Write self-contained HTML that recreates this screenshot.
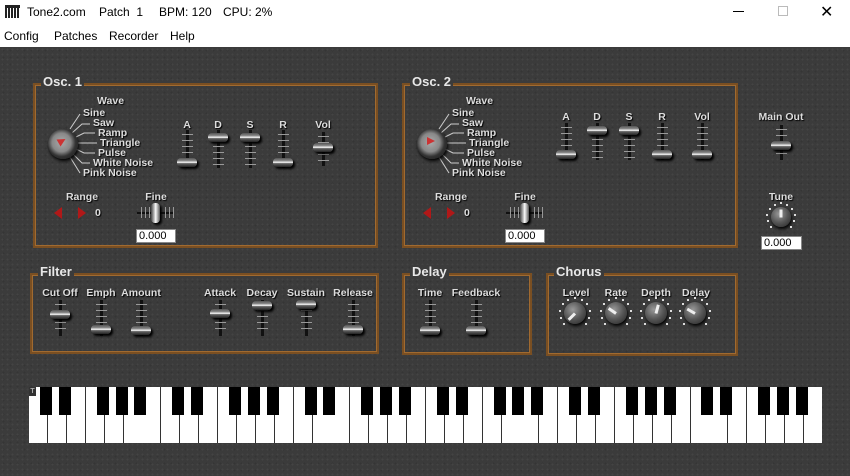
<!DOCTYPE html>
<html><head><meta charset="utf-8"><style>
*{margin:0;padding:0;box-sizing:border-box}
body{width:850px;height:476px;overflow:hidden;background:#fff;font-family:"Liberation Sans",sans-serif;position:relative}
#title{position:absolute;left:0;top:0;width:850px;height:25px;background:#fff;font-size:12px;color:#000}
#menu{position:absolute;left:0;top:25px;width:850px;height:22px;background:#fff;font-size:12px}
#main{position:absolute;left:0;top:47px;width:850px;height:429px;background:#3b3b3b;
background-image:radial-gradient(#444 1px,transparent 1px),radial-gradient(#353535 1px,transparent 1px);background-size:5px 5px,7px 7px}
.a{position:absolute;white-space:nowrap}
.box{position:absolute;border:2px solid #7a4f22;box-shadow:inset 0 0 0 1px #a06a30}
.ttl{position:absolute;font-weight:bold;font-size:13px;color:#e8e8e8;background:#3b3b3b;padding:0 2px;line-height:14px}
.l{position:absolute;font-weight:bold;font-size:10.5px;color:#ddd;white-space:nowrap;text-shadow:1px 1px 1px #000;line-height:11px}
.trk{position:absolute;width:3px;background:#111}
.tick{position:absolute;height:1px;width:11px;background:#999}
.cap{position:absolute;width:20px;height:9px;border-radius:4px;background:linear-gradient(#555,#888 30%,#fff 50%,#666 60%,#222);box-shadow:2px 2px 2px #000}
.knob{position:absolute;border-radius:50%;background:radial-gradient(circle at 40% 35%,#999,#555 50%,#222);box-shadow:1px 2px 3px #000}
.inp{position:absolute;background:#fff;border:1px solid #888;font-size:11px;color:#000;line-height:12px;padding-left:2px}
.wk{position:absolute;top:0;width:19px;height:56px;background:#fff;border-right:1px solid #333}
.bk{position:absolute;top:0;width:12px;height:28px;background:#000}
</style></head><body>
<div id="title">
<div class="a" style="left:5px;top:5px;width:15px;height:13px;background:repeating-linear-gradient(90deg,#222 0 2px,#fff 2px 3px);border-top:3px solid #222"></div>
<div class="a" style="left:27px;top:5px">Tone2.com</div>
<div class="a" style="left:99px;top:5px">Patch &nbsp;1</div>
<div class="a" style="left:159px;top:5px">BPM: 120</div>
<div class="a" style="left:223px;top:5px">CPU: 2%</div>
<div class="a" style="left:733px;top:11px;width:11px;height:1px;background:#000"></div>
<div class="a" style="left:778px;top:6px;width:10px;height:10px;border:1px solid #bbb"></div>
<div class="a" style="left:820px;top:2px;font-size:16px">✕</div>
</div>
<div id="menu">
<div class="a" style="left:4px;top:4px">Config</div>
<div class="a" style="left:54px;top:4px">Patches</div>
<div class="a" style="left:109px;top:4px">Recorder</div>
<div class="a" style="left:170px;top:4px">Help</div>
</div>
<div id="main"></div>
<div id="c"></div>
<script>
var h='';
function box(x,y,w,hh,t){h+='<div class="box" style="left:'+x+'px;top:'+y+'px;width:'+w+'px;height:'+hh+'px"></div><div class="ttl" style="left:'+(x+8)+'px;top:'+(y-8)+'px">'+t+'</div>';}
function lab(x,y,t,c){h+='<div class="l" style="left:'+x+'px;top:'+(y-5)+'px;'+(c?'transform:translateX(-50%)':'')+'">'+t+'</div>';}
function sl(x,t,b,k,label,ly){lab(x,ly,label,1);h+='<div class="trk" style="left:'+(x-1)+'px;top:'+t+'px;height:'+(b-t)+'px"></div>';
for(var y=t+4;y<b-2;y+=6)h+='<div class="tick" style="left:'+(x-5)+'px;top:'+y+'px"></div>';
h+='<div class="cap" style="left:'+(x-10)+'px;top:'+(k-4)+'px"></div>';}
function knob(x,y,r,ang,dots){h+='<div class="knob" style="left:'+(x-r)+'px;top:'+(y-r)+'px;width:'+2*r+'px;height:'+2*r+'px"></div>';
h+='<div class="a" style="left:'+x+'px;top:'+(y-1)+'px;width:'+(r-2)+'px;height:3px;background:#eee;transform-origin:0 50%;transform:rotate('+ang+'deg)"></div>';
if(dots)for(var a=135;a<=405;a+=27){var rr=r+4;h+='<div class="a" style="left:'+(x+rr*Math.cos(a*Math.PI/180)-1)+'px;top:'+(y+rr*Math.sin(a*Math.PI/180)-1)+'px;width:2px;height:2px;background:#ddd"></div>';}}
function osc(ox,name,w0){box(ox+33,83,w0,165,name);
lab(ox+97,101,'Wave');var w=[['Sine',83,113],['Saw',93,123],['Ramp',98,133],['Triangle',100,143],['Pulse',98,153],['White Noise',93,163],['Pink Noise',83,173]];
w.forEach(function(e){lab(ox+e[1],e[2],e[0]);});
var ls='<svg class="a" style="left:'+ox+'px;top:100px" width="110" height="80"><g stroke="#ccc" stroke-width="1" fill="none">'+
'<path d="M70 29 L80 14"/><path d="M72 33 L82 24 L90 24"/><path d="M76 37 L84 33 L95 33"/><path d="M78 43 L97 43"/><path d="M76 49 L84 53 L95 53"/><path d="M72 53 L82 63 L90 63"/><path d="M70 57 L80 73"/></g></svg>';
h+=ls;
h+='<div class="knob" style="left:'+(ox+48)+'px;top:'+129+'px;width:30px;height:30px;background:radial-gradient(circle at 45% 45%,#aaa,#888 40%,#333 60%,#111)"></div>';
h+='<div class="a" style="left:'+(ox+58)+'px;top:137px;width:0;height:0;border-top:4px solid transparent;border-bottom:4px solid transparent;border-left:8px solid #c33;transform:rotate('+(name=='Osc. 1'?-30:0)+'deg)"></div>';
lab(ox+82,197,'Range',1);
h+='<div class="a" style="left:'+(ox+54)+'px;top:207px;border-top:6px solid transparent;border-bottom:6px solid transparent;border-right:8px solid #b01818"></div>';
h+='<div class="a" style="left:'+(ox+78)+'px;top:207px;border-top:6px solid transparent;border-bottom:6px solid transparent;border-left:8px solid #b01818"></div>';
lab(ox+95,213,'0');lab(ox+156,197,'Fine',1);
h+='<div class="a" style="left:'+(ox+137)+'px;top:212px;width:36px;height:2px;background:#111"></div>';
for(var i=0;i<6;i++)h+='<div class="a" style="left:'+(ox+141+i*4+(i>=3?12:0))+'px;top:207px;width:1px;height:11px;background:#999"></div>';
h+='<div class="a" style="left:'+(ox+151)+'px;top:203px;width:9px;height:20px;border-radius:4px;background:linear-gradient(90deg,#444,#ddd 45%,#fff 50%,#555);box-shadow:2px 2px 2px #000"></div>';
h+='<div class="inp" style="left:'+(ox+136)+'px;top:229px;width:40px;height:14px">0.000</div>';}
osc(0,'Osc. 1',345);osc(369,'Osc. 2',336);
sl(187,130,168,162,'A',125);sl(218,130,168,137,'D',125);sl(250,130,168,137,'S',125);sl(283,130,168,162,'R',125);sl(323,132,166,147,'Vol',125);
sl(566,123,160,154,'A',117);sl(597,123,160,130,'D',117);sl(629,123,160,130,'S',117);sl(662,123,160,154,'R',117);sl(702,123,160,154,'Vol',117);
sl(781,125,160,145,'Main Out',117);
lab(781,197,'Tune',1);knob(781,217,10,-90,1);
h+='<div class="inp" style="left:761px;top:236px;width:41px;height:14px">0.000</div>';
box(30,273,349,81,'Filter');box(402,273,130,82,'Delay');box(546,273,192,83,'Chorus');
sl(60,300,336,314,'Cut Off',293);sl(101,300,336,329,'Emph',293);sl(141,300,336,330,'Amount',293);
sl(220,300,336,313,'Attack',293);sl(262,300,336,305,'Decay',293);sl(306,300,336,304,'Sustain',293);sl(353,300,336,329,'Release',293);
sl(430,300,336,330,'Time',293);sl(476,300,336,330,'Feedback',293);
lab(576,293,'Level',1);lab(616,293,'Rate',1);lab(656,293,'Depth',1);lab(696,293,'Delay',1);
knob(575,313,11,135,1);knob(616,313,11,-145,1);knob(656,313,11,-75,1);knob(695,313,11,-150,1);
var k='<div class="a" style="left:29px;top:387px;width:793px;height:56px;background:#fff;overflow:hidden">';
for(var i=0;i<42;i++)k+='<div class="wk" style="left:'+(i*18.9)+'px"></div>';
var bp=[1,2,4,5,6];
for(var o=0;o<6;o++)bp.forEach(function(n){k+='<div class="bk" style="left:'+((o*7+n)*18.9-8)+'px"></div>';});
k+='<div class="a" style="left:0;top:0;width:7px;height:9px;background:#333;color:#aaa;font-size:7px;font-weight:bold;line-height:9px;text-align:center">T</div></div>';
h+=k;
document.getElementById('c').innerHTML=h;
</script>
</body></html>
